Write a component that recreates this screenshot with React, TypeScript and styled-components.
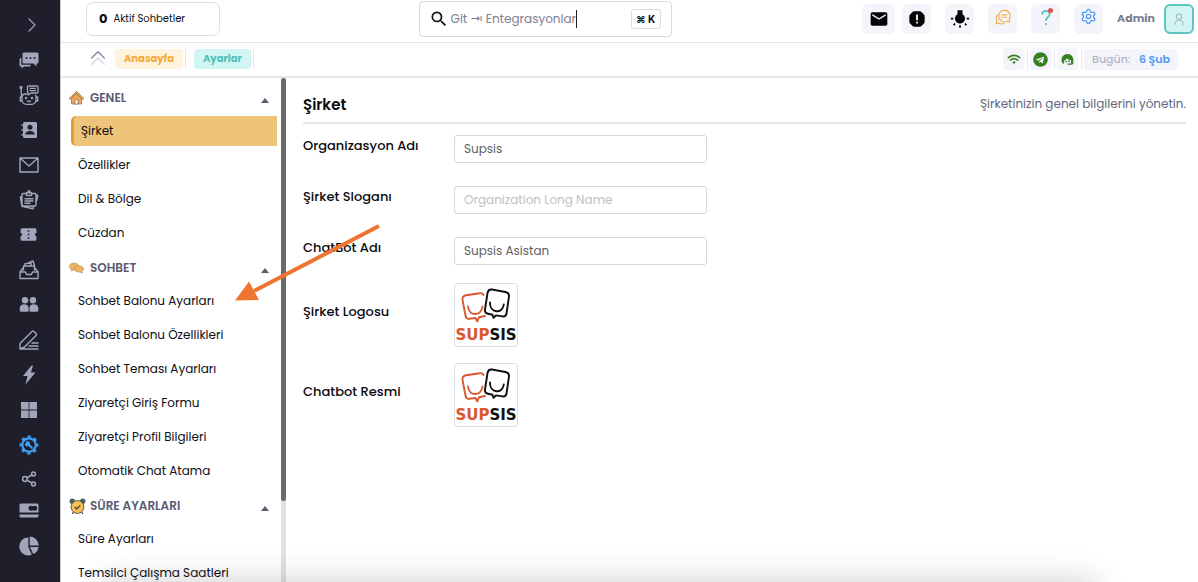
import React from 'react';
import styled, { createGlobalStyle, css } from 'styled-components';
import { MdEmail, MdSearch, MdWbIncandescent, MdConfirmationNumber } from 'react-icons/md';
import { FaTelegram } from 'react-icons/fa';
import { Settings } from 'lucide-react';

const GlobalStyle = createGlobalStyle`
  * { box-sizing: border-box; }
  body {
    margin: 0;
    background: #fff;
    color: #0e0e14;
    font-family: Poppins, Inter, "Liberation Sans", sans-serif;
    font-size: 12px;
  }
  button, input { font: inherit; color: inherit; margin: 0; }
  button { padding: 0; border: 0; background: none; cursor: pointer; }
  a { color: inherit; text-decoration: none; }
  ul { margin: 0; padding: 0; list-style: none; }
  svg { display: block; flex: none; }
`;

const Shell = styled.div`
  position: relative;
  display: flex;
  height: 100vh;
  overflow: hidden;
`;

const Rail = styled.nav`
  flex: 0 0 60px;
  display: flex;
  flex-direction: column;
  align-items: center;
  padding: 7px 3px 0 0;
  background: #1f1e2b;
`;

const RailLink = styled.a<{ $active?: boolean; $compact?: boolean }>`
  display: flex;
  align-items: center;
  justify-content: center;
  flex: none;
  width: 40px;
  height: ${(p) => (p.$compact ? 33 : 35)}px;
  color: ${(p) => (p.$active ? '#3f9fee' : '#a3a6bb')};
`;

const RailToggle = styled.button`
  display: flex;
  align-items: center;
  justify-content: center;
  flex: none;
  width: 34px;
  height: 35px;
  align-self: flex-end;
  margin-right: 8px;
  color: #8d8fa8;
`;

const Page = styled.div`
  flex: 1;
  min-width: 0;
  display: flex;
  flex-direction: column;
  border-left: 1px solid #c9c9ce;
`;

const TopBar = styled.header`
  flex: none;
  display: flex;
  justify-content: space-between;
  align-items: center;
  height: 43px;
  padding: 0 4px 5px 25px;
  border-bottom: 1px solid #e6e6ea;
`;

const ChatSlot = styled.div`
  padding-right: 8px;
`;

const ActiveChats = styled.button`
  display: flex;
  align-items: center;
  gap: 6px;
  width: 134px;
  height: 34px;
  padding: 0 12px;
  border: 1px solid #dedee2;
  border-radius: 7px;
  font-size: 10px;

  b { font-size: 13px; font-weight: 700; }
`;

const SearchBox = styled.label`
  display: flex;
  align-items: center;
  width: 253px;
  height: 36px;
  padding: 0 10px 0 9px;
  border: 1px solid #d9dade;
  border-radius: 4px;
`;

const SearchInput = styled.input`
  field-sizing: content;
  margin-left: 2px;
  padding: 0;
  border: 0;
  outline: 0;
  background: none;
  color: #7c7e90;
  font-size: 12px;
`;

const Caret = styled.span`
  width: 1px;
  height: 18px;
  background: #222;
`;

const Shortcut = styled.kbd`
  margin-left: auto;
  width: 30px;
  height: 20px;
  border: 1px solid #dcdce0;
  border-radius: 3px;
  font: 700 10px/18px Inter, "DejaVu Sans", sans-serif;
  text-align: center;
`;

const Actions = styled.div`
  display: flex;
  align-items: center;
  gap: 14px;
`;

const ActionPair = styled.div`
  display: flex;
  gap: 7px;
`;

const ActionButton = styled.button<{ $wide?: boolean; $color?: string }>`
  display: flex;
  align-items: center;
  justify-content: center;
  width: ${(p) => (p.$wide ? 33 : 29)}px;
  height: 30px;
  padding-bottom: ${(p) => (p.$color ? 4 : 0)}px;
  border-radius: 6px;
  background: #f4f5fa;
  color: ${(p) => p.$color ?? '#050505'};
`;

const User = styled.div`
  display: flex;
  align-items: center;
  gap: 9px;
  color: #7b7e93;
  font-size: 11px;
  font-weight: 700;
`;

const Avatar = styled.button`
  display: flex;
  align-items: center;
  justify-content: center;
  width: 30px;
  height: 30px;
  border: 2px solid #5cc6bf;
  border-radius: 6px;
  background: #d2f5f2;
  color: #a3b8bf;
`;

const SubBar = styled.div`
  flex: none;
  display: flex;
  justify-content: space-between;
  height: 35px;
  padding: 0 20px 1px 28px;
  border-bottom: 2px solid #e4e9f0;
`;

const Crumbs = styled.nav`
  display: flex;
  align-items: center;
`;

const CollapseButton = styled.button`
  width: 18px;
  margin-right: 8px;
  padding-bottom: 3px;
`;

const Crumb = styled.a<{ $tone: 'amber' | 'teal' }>`
  height: 20px;
  padding: 0 9px;
  border-radius: 4px;
  font-size: 10px;
  line-height: 20px;
  font-weight: 700;
  ${(p) =>
    p.$tone === 'amber'
      ? css`background: #fff3dd; color: #f7a93b;`
      : css`background: #d1f5f2; color: #4ec0b9;`}
`;

const CrumbDivider = styled.span`
  width: 1px;
  height: 20px;
  margin: 0 8px 0 2px;
  background: #e3e6ee;
`;

const Status = styled.div`
  display: flex;
  align-items: center;
`;

const StatusButton = styled.button`
  display: flex;
  align-items: center;
  justify-content: center;
  width: 21px;
  height: 22px;
  border-radius: 4px;
  background: #f4f5fa;
  color: #37801f;
`;

const StatusDivider = styled.span`
  width: 1px;
  height: 20px;
  margin: 0 2px 0 3px;
  background: #e6e8ef;
`;

const Today = styled.button`
  display: flex;
  align-items: center;
  justify-content: space-between;
  width: 94px;
  height: 21px;
  padding: 0 8px;
  border-radius: 4px;
  background: #f4f5fa;
  color: #b3b5c5;
  font-size: 11px;
  font-weight: 500;

  b { color: #4e97f5; font-weight: 600; }
`;

const Body = styled.div`
  flex: 1;
  min-height: 0;
  display: flex;
`;

const SettingsNav = styled.nav`
  flex: 0 0 220px;
  overflow: hidden;
  padding: 5px 4px 0 8px;
`;

const SectionHead = styled.button`
  display: flex;
  align-items: center;
  width: 100%;
  height: 33px;
  padding: 0 8px 3px 0;
  color: #5a5c72;
  font-weight: 600;
`;

const SectionIcon = styled.span`
  display: flex;
  width: 21px;
`;

const Triangle = styled.span`
  margin: 4px 0 0 auto;
  border: 4px solid transparent;
  border-top-width: 0;
  border-bottom: 5px solid #5a5c72;
`;

const SectionList = styled.ul`
  padding: 0 0 1px 2px;
`;

const Item = styled.a<{ $active?: boolean }>`
  display: block;
  height: 30px;
  margin-bottom: 4px;
  padding-left: 7px;
  line-height: 30px;
  white-space: nowrap;
  ${(p) =>
    p.$active &&
    css`
      border-left: 3px solid #e49a35;
      border-radius: 5px 0 0 5px;
      background: #eec37a;
    `}
`;

const ScrollTrack = styled.div`
  flex: 0 0 5px;
  background: #dfe3e8;
`;

const ScrollThumb = styled.div`
  height: 84%;
  background: #6a6a6b;
  border-radius: 3px;
`;

const Content = styled.main`
  flex: 1;
  min-width: 0;
  padding: 12px 12px 0 17px;
`;

const ContentHead = styled.div`
  display: flex;
  align-items: center;
  justify-content: space-between;
  height: 34px;
  margin-bottom: 11px;
  padding-bottom: 4px;
  border-bottom: 2px solid #e2e5ea;
  color: #64667a;

  h1 { margin: 0; color: #0b0b10; font-size: 15px; font-weight: 600; }
`;

const Form = styled.form`
  display: flex;
  flex-direction: column;
  gap: 18px;
`;

const FieldGroup = styled.div<{ $gap: number }>`
  display: flex;
  flex-direction: column;
  gap: ${(p) => p.$gap}px;
`;

const FieldRow = styled.div`
  display: grid;
  grid-template-columns: 151px 253px;
  align-items: start;
`;

const FieldLabel = styled.label<{ $tall?: boolean }>`
  line-height: ${(p) => (p.$tall ? 58 : 22)}px;
  color: #0b0b10;
  font-size: 13px;
  font-weight: 500;
`;

const TextInput = styled.input`
  height: 28px;
  padding: 0 9px;
  border: 1px solid #d7d8dc;
  border-radius: 3px;
  outline: 0;
  color: #5f6064;

  &::placeholder { color: #bebfc4; opacity: 1; }
`;

const LogoButton = styled.button`
  width: 64px;
  height: 64px;
  overflow: hidden;
  border: 1px solid #d8dfe6;
  border-radius: 3px;
`;

const Pointer = styled.svg`
  position: absolute;
  left: 232px;
  top: 220px;
  pointer-events: none;
`;

const BottomShadow = styled.div`
  position: absolute;
  left: 100px;
  right: 103px;
  bottom: -60px;
  height: 60px;
  box-shadow: 0 0 34px rgba(0, 0, 0, 0.2);
  pointer-events: none;
`;

type IconProps = { size?: number; children: React.ReactNode; solid?: boolean; width?: number };

const Icon = ({ size = 20, children, solid, width = 1.4 }: IconProps) => (
  <svg
    width={size}
    height={size}
    viewBox="0 0 20 20"
    fill={solid ? 'currentColor' : 'none'}
    stroke={solid ? 'none' : 'currentColor'}
    strokeWidth={width}
    strokeLinecap="round"
    strokeLinejoin="round"
    aria-hidden="true"
  >
    {children}
  </svg>
);

const railItems: { label: string; active?: boolean; compact?: boolean; icon: React.ReactNode }[] = [
  {
    label: 'Sohbetler',
    icon: (
      <Icon solid>
        <path d="M5 2.500h13a1.500 1.500 0 0 1 1.500 1.500v8a1.500 1.500 0 0 1-1.500 1.500h-.5v3l-3-3H5A1.500 1.500 0 0 1 3.500 12V4A1.500 1.500 0 0 1 5 2.500z" />
        <path d="M2.300 8v6.800h9.200v1.700H5.200L2.600 18.600v-2.100H2A1.500 1.500 0 0 1 .5 15V9.500A1.500 1.500 0 0 1 2.300 8z" />
        <g fill="#1f1e2b">
          <circle cx="7.500" cy="8" r="1" />
          <circle cx="11.500" cy="8" r="1" />
          <circle cx="15.500" cy="8" r="1" />
        </g>
      </Icon>
    ),
  },
  {
    label: 'Botlar',
    icon: (
      <Icon width={1.3}>
        <path d="M8 9H6a3 3 0 0 0-3 3v3a4.500 4.500 0 0 0 4.500 4.300h5A4.500 4.500 0 0 0 17 15v-3a3 3 0 0 0-.6-1.800M3 12H1.300v4H3M17 12h1.700v4H17M2.500 11.500 2 3" />
        <circle cx="2" cy="2.500" r="1" />
        <path d="M9.800 1H18a1 1 0 0 1 1 1v5a1 1 0 0 1-1 1h-6l-2.700 2V8A1 1 0 0 1 8.500 7V2a1 1 0 0 1 1.300-1zM11 3.300h5.500M11 5.700h5.500M8.300 16q1.700 1 3.400 0" />
        <circle cx="7" cy="13" r=".6" fill="currentColor" />
        <circle cx="13" cy="13" r=".6" fill="currentColor" />
      </Icon>
    ),
  },
  {
    label: 'Kişiler',
    icon: (
      <Icon solid>
        <path d="M5.500 2h11A1.500 1.500 0 0 1 18 3.500v13a1.500 1.500 0 0 1-1.500 1.500h-11A1.500 1.500 0 0 1 4 16.500v-1H2.500V14H4v-3.200H2.500V9.300H4V6H2.500V4.500H4v-1A1.500 1.500 0 0 1 5.500 2z" />
        <g fill="#1f1e2b">
          <circle cx="11" cy="7.300" r="2.500" />
          <path d="M6.300 14.500c0-2.300 2-3.500 4.700-3.500s4.700 1.200 4.700 3.500z" />
        </g>
      </Icon>
    ),
  },
  {
    label: 'E-posta',
    icon: (
      <Icon>
        <path d="M1 3h18v14H1zM1.500 3.500 10 11l8.500-7.500" />
      </Icon>
    ),
  },
  {
    label: 'Notlar',
    icon: (
      <Icon>
        <path d="M7 3.500H4a1 1 0 0 0-1 1V15a1 1 0 0 0 1 1h12a1 1 0 0 0 1-1V4.500a1 1 0 0 0-1-1h-3M7.500 2.800h5v2.700h-5zM6 8.700h8M6 11h8M6 13.300h5M3 6l-1.700 1L3 16.500M4 16.500l10 2.300.5-2.300M17 5l1.800.5L17 13" />
        <circle cx="10" cy="1.700" r="1" />
      </Icon>
    ),
  },
  { label: 'Biletler', icon: <MdConfirmationNumber size={19} /> },
  {
    label: 'Arşiv',
    icon: (
      <Icon>
        <path d="M4 8 1 12v6.500h18V12l-3-4M1 12h5.500l1 2.500h5l1-2.500H19M4.500 10V6h11v4M6 6V3.700l6-.7v2.500M9 3l5-2 1.500 4.500" />
      </Icon>
    ),
  },
  {
    label: 'Ekip',
    icon: (
      <Icon solid>
        <circle cx="6" cy="5.300" r="3.200" />
        <circle cx="14" cy="5.300" r="3.200" />
        <path d="M.7 15.500V13c0-2.300 2-3.800 4.700-3.800S9.600 11 9.600 13v2.500q0 1.300-1.300 1.300H2q-1.300 0-1.300-1.300zM10.400 15.500V13c0-2 1.500-3.800 4.200-3.800s4.700 1.500 4.700 3.800v2.500q0 1.300-1.300 1.300h-6.300q-1.300 0-1.300-1.300z" />
      </Icon>
    ),
  },
  {
    label: 'Düzenle',
    icon: (
      <Icon>
        <path d="M1 19v-5.500L13 1.500q1-1 2 0l2 2q1 1 0 2L5.500 17 1 19zM1 19h18M10 16h9M13 13h6" />
      </Icon>
    ),
  },
  {
    label: 'Hızlı işlem',
    icon: (
      <Icon solid>
        <path d="M12.500.5 4 11h4.500L6.500 19.500 16.500 7.500H12L14 .5z" />
      </Icon>
    ),
  },
  {
    label: 'Uygulamalar',
    icon: (
      <Icon solid>
        <path d="M2 2h7.600v7.600H2zM10.400 2H18v7.600h-7.600zM2 10.400h7.600V18H2zM10.400 10.400H18V18h-7.600z" />
      </Icon>
    ),
  },
  {
    label: 'Ayarlar',
    active: true,
    icon: (
      <Icon width={2.2}>
        <circle cx="10" cy="10" r="6.700" />
        <circle cx="10" cy="10" r="8.300" strokeDasharray="3.400 3.119" strokeDashoffset="1.700" strokeLinecap="butt" />
        <path d="m9.500 9.500 3.300 3.300" />
        <path d="M7 6.200v2.300H5.700A2.700 2.700 0 1 0 9.300 6.200z" fill="currentColor" stroke="none" />
      </Icon>
    ),
  },
  {
    label: 'Paylaş',
    compact: true,
    icon: (
      <Icon width={1.5}>
        <circle cx="6" cy="10" r="2.400" />
        <circle cx="14.500" cy="5" r="1.900" />
        <circle cx="14.500" cy="15" r="1.900" />
        <path d="m8 8.800 4.800-2.800M8 11.200l4.800 2.800" />
      </Icon>
    ),
  },
  {
    label: 'Ödeme',
    compact: true,
    icon: (
      <Icon solid>
        <path d="M2 1.500h16A1.500 1.500 0 0 1 19.500 3v7.500H.5V3A1.500 1.500 0 0 1 2 1.500zM.5 12.500h19V14a1.500 1.500 0 0 1-1.500 1.500H2A1.500 1.500 0 0 1 .5 14z" />
        <g fill="#1f1e2b">
          <circle cx="12" cy="6.200" r="2.500" />
          <circle cx="15.700" cy="6.200" r="2.500" />
        </g>
      </Icon>
    ),
  },
  {
    label: 'Raporlar',
    icon: (
      <Icon solid>
        <path d="M9.300 1.500v9.300l3.500 8A9 9 0 1 1 9.300 1.500z" />
        <path d="M10.700.5a9 9 0 0 1 9 9h-9zM11 11h8.500a8 8 0 0 1-5.300 7z" />
      </Icon>
    ),
  },
];

const HouseIcon = () => (
  <svg width="15" height="14" viewBox="0 0 15 14" aria-hidden="true">
    <path d="M2.500 7v6h10V7l-5-5z" fill="#efa659" stroke="#777" strokeWidth=".7" />
    <path d="M1.200 7.500 7.500 1.600l6.300 5.900" fill="none" stroke="#74706e" strokeWidth="2.200" strokeLinecap="round" />
    <path d="M1.200 7.400 7.500 1.600 13.800 7.400" fill="none" stroke="#f0a04b" strokeWidth="1.400" strokeLinecap="round" />
    <path d="M6 13V8.700h3V13z" fill="#fff" stroke="#777" strokeWidth=".7" />
  </svg>
);

const BubblesIcon = () => (
  <svg width="15" height="12" viewBox="0 0 15 12" aria-hidden="true">
    <g fill="#edb55f" stroke="#a58a5c" strokeWidth=".6">
      <path d="M5 1c2.700 0 4.600 1.400 4.600 3.500S7.700 8 5 8L2 9l.3-1.700C1.200 6.700.5 5.600.5 4.500.5 2.400 2.300 1 5 1z" />
      <path d="M10 3.800c2.700 0 4.500 1.300 4.500 3.200 0 1-.6 1.900-1.400 2.400l.3 1.600-2.400-.9H10c-2.600 0-4.300-1.300-4.300-3.100S7.400 3.800 10 3.800z" />
    </g>
  </svg>
);

const ClockIcon = () => (
  <svg width="17" height="17" viewBox="0 0 18 18" aria-hidden="true">
    <g fill="#49656b" stroke="#2f3c42" strokeWidth=".8">
      <circle cx="3.500" cy="3.500" r="2.500" />
      <circle cx="14.500" cy="3.500" r="2.500" />
    </g>
    <path d="m4.500 15-1 2M13.500 15l1 2" stroke="#333" strokeWidth="1.200" />
    <circle cx="9" cy="9.500" r="6.800" fill="#f6bf55" stroke="#57503f" strokeWidth="1" />
    <path d="m6 9.500 2.200 2L12 7.800" fill="none" stroke="#333" strokeWidth="1.200" />
  </svg>
);

const sections = [
  { title: 'GENEL', icon: <HouseIcon />, items: ['Şirket', 'Özellikler', 'Dil & Bölge', 'Cüzdan'] },
  {
    title: 'SOHBET',
    icon: <BubblesIcon />,
    items: [
      'Sohbet Balonu Ayarları',
      'Sohbet Balonu Özellikleri',
      'Sohbet Teması Ayarları',
      'Ziyaretçi Giriş Formu',
      'Ziyaretçi Profil Bilgileri',
      'Otomatik Chat Atama',
    ],
  },
  { title: 'SÜRE AYARLARI', icon: <ClockIcon />, items: ['Süre Ayarları', 'Temsilci Çalışma Saatleri'] },
];

const SupsisLogo = () => (
  <svg width="62" height="62" viewBox="0 0 62 62" role="img" aria-label="Supsis">
    <g fill="none" strokeWidth="1.900" strokeLinecap="round" strokeLinejoin="round">
      <g stroke="#d9582d">
        <path d="M28.500 11Q27.500 8.800 25 9.200L11 11.300Q7 12.200 7.500 16L10.500 31.500Q11.200 35.300 14.500 34.800L20.500 34 22.300 37.500 24 33.300 30 32" />
        <path d="M13 22.500C14 33 26.500 32 27.500 22.500" />
      </g>
      <g stroke="#111">
        <path d="M37 5.500 50.500 8Q54.500 9 54 12.500L51.500 29.500Q50.800 33 47.500 32.400L41 31.400 38.500 33.800 37.500 30.800 33 29.800Q29.500 29 30 25.500L32.500 9Q33.200 5 37 5.500z" />
        <path d="M35 18.500C34.500 29 47.500 30.500 48.800 20.500" />
      </g>
    </g>
    <text x="31" y="56" textAnchor="middle" fontFamily="DejaVu Sans, sans-serif" fontWeight="700" fontSize="15" fill="#111">
      <tspan fill="#d9582d">SUP</tspan>SIS
    </text>
  </svg>
);

const fields = [
  { id: 'org', label: 'Organizasyon Adı', value: 'Supsis' },
  { id: 'slogan', label: 'Şirket Sloganı', value: '', placeholder: 'Organization Long Name' },
  { id: 'bot', label: 'ChatBot Adı', value: 'Supsis Asistan' },
];

const logos = [
  { id: 'logo', label: 'Şirket Logosu' },
  { id: 'bot-image', label: 'Chatbot Resmi' },
];

export default function App() {
  return (
    <Shell>
      <GlobalStyle />
      <Rail aria-label="Ana menü">
        <RailToggle aria-label="Menüyü aç">
          <Icon width={1.6}>
            <path d="m7 4 6 6-6 6" />
          </Icon>
        </RailToggle>
        {railItems.map((r) => (
          <RailLink key={r.label} href="#" aria-label={r.label} $active={r.active} $compact={r.compact}>
            {r.icon}
          </RailLink>
        ))}
      </Rail>

      <Page>
        <TopBar>
          <ChatSlot>
            <ActiveChats>
              <b>0</b> Aktif Sohbetler
            </ActiveChats>
          </ChatSlot>
          <SearchBox>
            <MdSearch size={20} color="#111" />
            <SearchInput aria-label="Ara" defaultValue="Git ⇥ Entegrasyonlar" />
            <Caret />
            <Shortcut>⌘ K</Shortcut>
          </SearchBox>
          <Actions>
            <ActionPair>
              <ActionButton $wide aria-label="E-posta">
                <MdEmail size={20} />
              </ActionButton>
              <ActionButton aria-label="Uyarılar">
                <Icon size={18} solid>
                  <path d="M7 1.500h6q1.200 0 2 .8l2.700 2.700q.8.800.8 2v6q0 1.200-.8 2L15 17.700q-.8.800-2 .8H7q-1.200 0-2-.8L2.300 15q-.8-.8-.8-2V7q0-1.200.8-2L5 2.300q.8-.8 2-.8z" />
                  <path d="M9 5h2v6.500H9zM9 13h2v2H9z" fill="#fff" />
                </Icon>
              </ActionButton>
            </ActionPair>
            <ActionButton aria-label="Tema">
              <MdWbIncandescent size={20} />
            </ActionButton>
            <ActionButton aria-label="Sohbet" $color="#f5b04b">
              <Icon size={16} width={1.5}>
                <path d="M11.500 1.500a7.300 7.300 0 0 1 6.300 11l.7 3.500-3.500-.6A7.300 7.300 0 1 1 11.500 1.500zM3 7.500a7 7 0 0 0-.8 7L1.500 18.500l4-.7a7 7 0 0 0 5.500.3M8.500 7.300h6M8.500 10.300h6" />
              </Icon>
            </ActionButton>
            <ActionButton aria-label="Yardım" $color="#4fc0bb">
              <svg width="18" height="18" viewBox="0 0 18 18" fill="none" aria-hidden="true">
                <path d="M5 6.500C5 1.500 13 2 12.600 6.500 12.300 9.300 9 9.300 9 12.800" stroke="currentColor" strokeWidth="1.700" />
                <circle cx="9" cy="16" r="1.100" fill="currentColor" />
                <circle cx="13.500" cy="2.500" r="2.500" fill="#ea4f5b" />
              </svg>
            </ActionButton>
            <ActionButton aria-label="Ayarlar" $color="#4e97f5">
              <Settings size={17} strokeWidth={1.8} />
            </ActionButton>
            <User>
              Admin
              <Avatar aria-label="Hesap">
                <Icon size={12} width={1.7}>
                  <circle cx="10" cy="6" r="4.500" />
                  <path d="M3 19c0-4.500 3-7 7-7s7 2.500 7 7" />
                </Icon>
              </Avatar>
            </User>
          </Actions>
        </TopBar>

        <SubBar>
          <Crumbs>
            <CollapseButton aria-label="Daralt">
              <Icon size={18} width={1.7}>
                <path d="m3 10 7-7 7 7" stroke="#8c8eab" />
                <path d="m3 17 7-7 7 7" stroke="#d7d7e2" />
              </Icon>
            </CollapseButton>
            <Crumb href="#" $tone="amber">Anasayfa</Crumb>
            <CrumbDivider />
            <Crumb href="#" $tone="teal">Ayarlar</Crumb>
            <CrumbDivider />
          </Crumbs>
          <Status>
            <StatusButton aria-label="Bağlantı">
              <Icon size={14} width={2.4}>
                <path d="M2 8q8-6.500 16 0M5 11.500q5-4 10 0" />
                <path d="M7.500 14.200q2.500-1.700 5 0L10 17z" fill="currentColor" stroke="none" />
              </Icon>
            </StatusButton>
            <StatusDivider />
            <StatusButton aria-label="Telegram">
              <FaTelegram size={15} />
            </StatusButton>
            <StatusDivider />
            <StatusButton aria-label="Destek">
              <Icon size={13} solid>
                <path d="M1 13C0 6 4 1.500 10 1.500S19.500 6 19 12v4.500q-1 1.500-3.500 1.500H10v-2h5.500V11q-4 0-6.500-3-1.500 3-4.500 4v5Q1.500 16 1 13z" />
                <circle cx="7.500" cy="13" r="1.300" />
                <circle cx="12.500" cy="13" r="1.300" />
              </Icon>
            </StatusButton>
            <StatusDivider />
            <Today>
              Bugün: <b>6 Şub</b>
            </Today>
          </Status>
        </SubBar>

        <Body>
          <SettingsNav aria-label="Ayarlar menüsü">
            {sections.map((s) => (
              <section key={s.title}>
                <SectionHead>
                  <SectionIcon>{s.icon}</SectionIcon>
                  {s.title}
                  <Triangle />
                </SectionHead>
                <SectionList>
                  {s.items.map((item) => (
                    <li key={item}>
                      <Item href="#" $active={item === 'Şirket'}>{item}</Item>
                    </li>
                  ))}
                </SectionList>
              </section>
            ))}
          </SettingsNav>
          <ScrollTrack>
            <ScrollThumb />
          </ScrollTrack>

          <Content>
            <ContentHead>
              <h1>Şirket</h1>
              <span>Şirketinizin genel bilgilerini yönetin.</span>
            </ContentHead>
            <Form>
              <FieldGroup $gap={23}>
                {fields.map((f) => (
                  <FieldRow key={f.id}>
                    <FieldLabel htmlFor={f.id}>{f.label}</FieldLabel>
                    <TextInput id={f.id} defaultValue={f.value} placeholder={f.placeholder} />
                  </FieldRow>
                ))}
              </FieldGroup>
              <FieldGroup $gap={16}>
                {logos.map((l) => (
                  <FieldRow key={l.id}>
                    <FieldLabel htmlFor={l.id} $tall>{l.label}</FieldLabel>
                    <LogoButton id={l.id} type="button">
                      <SupsisLogo />
                    </LogoButton>
                  </FieldRow>
                ))}
              </FieldGroup>
            </Form>
          </Content>
        </Body>
      </Page>

      <BottomShadow />
      <Pointer width="150" height="84" viewBox="0 0 150 84" aria-hidden="true">
        <path d="M147 6 22 71" stroke="#ee7430" strokeWidth="4" />
        <path d="M3 80.500 17 61.500 27 80z" fill="#ee7430" />
      </Pointer>
    </Shell>
  );
}
